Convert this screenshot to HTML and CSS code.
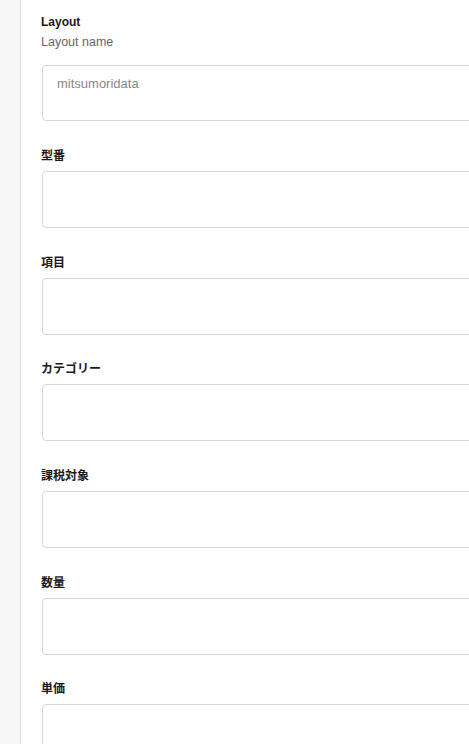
FILE: index.html
```html
<!DOCTYPE html>
<html lang="ja">
<head>
<meta charset="utf-8">
<link rel="stylesheet" href="styles.css">
</head>
<body>
<div class="app">
  <aside class="sidebar"></aside>
  <main class="content">
    <div class="intro">
      <div class="title">Layout</div>
      <div class="desc">Layout name</div>
      <div class="input input-first"><span class="placeholder">mitsumoridata</span></div>
    </div>
    <div class="field"><div class="label">型番</div><div class="input"></div></div>
    <div class="field"><div class="label">項目</div><div class="input"></div></div>
    <div class="field"><div class="label">カテゴリー</div><div class="input"></div></div>
    <div class="field"><div class="label">課税対象</div><div class="input"></div></div>
    <div class="field"><div class="label">数量</div><div class="input"></div></div>
    <div class="field"><div class="label">単価</div><div class="input"></div></div>
  </main>
</div>
</body>
</html>
```
FILE: styles.css
```css
html, body {
  margin: 0;
  padding: 0;
  background: #ffffff;
  overflow: hidden;
  height: 744px;
}
body {
  font-family: "Liberation Sans", "Noto Sans CJK JP", sans-serif;
  color: #1a1a1a;
}
.app {
  display: flex;
  height: 744px;
  overflow: hidden;
}
.sidebar {
  width: 20px;
  flex: none;
  background: #f7f7f7;
  border-right: 1px solid #dcdcdc;
}
.content {
  flex: 1;
  min-width: 0;
  overflow: hidden;
  padding: 14px 0 0 20px;
}
.title {
  font-size: 12px;
  font-weight: bold;
  line-height: 16px;
}
.desc {
  font-size: 12.5px;
  color: #666666;
  line-height: 18px;
  margin-top: 3px;
}
.input {
  box-sizing: border-box;
  height: 57px;
  width: 480px;
  margin-left: 1px;
  border: 1px solid #d6d6d6;
  border-radius: 4px;
  background: #ffffff;
}
.input-first {
  margin-top: 14px;
  height: 56px;
  padding: 10px 14px;
}
.placeholder {
  font-size: 13px;
  line-height: 16px;
  color: #888888;
  display: block;
}
.field {
  margin-top: 25.67px;
}
.intro + .field {
  margin-top: 26px;
}
.label {
  font-family: "Noto Sans CJK JP", "Liberation Sans", sans-serif;
  font-size: 12px;
  font-weight: bold;
  line-height: 16px;
  margin-bottom: 8px;
}
```
